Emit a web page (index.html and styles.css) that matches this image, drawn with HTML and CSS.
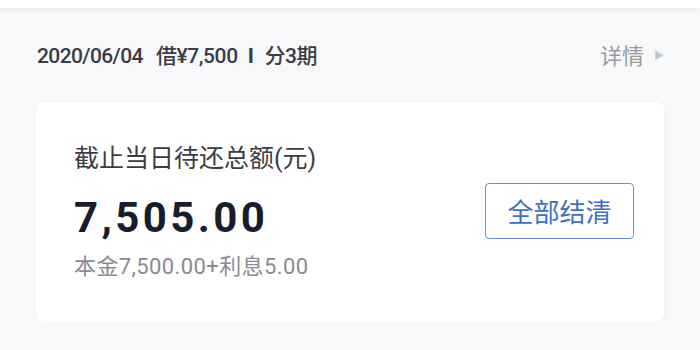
FILE: index.html
```html
<!DOCTYPE html>
<html lang="zh-CN">
<head>
  <meta charset="UTF-8" />
  <meta name="viewport" content="width=device-width, initial-scale=1.0" />
  <title>借款详情</title>
  <link rel="stylesheet" href="styles.css">
</head>
<body>

  <div class="topbar"></div>

  <!-- 借款信息 -->
  <div class="loan-head">
    <div class="loan-title"><span class="date">2020/06/04</span>借¥7,500<span class="sep">I</span>分3期</div>
    <div class="loan-more">详情 <span class="arrow">▶</span></div>
  </div>

  <!-- 待还卡片 -->
  <div class="card">
    <div class="card-info">
      <div class="label">截止当日待还总额(元)</div>
      <div class="amount">7,505.00</div>
      <div class="detail">本金7,500.00+利息5.00</div>
    </div>
    <button class="btn-settle">全部结清</button>
  </div>

</body>
</html>
```

FILE: styles.css
```css
body {
  margin: 0;
  background: #f7f8fa;
  font-family: Roboto, "Noto Sans CJK SC", sans-serif;
  color: #333;
}

.topbar {
  height: 8px;
  background: #fff;
  box-shadow: 0 2px 4px rgba(0,0,0,0.05);
}

.loan-head {
  display: flex;
  justify-content: space-between;
  align-items: center;
  padding: 30px 36px 0 37px;
  height: 32px;
}

.loan-title {
  font-size: 21px;
  font-weight: 500;
  letter-spacing: -0.4px;
  color: #3a3c45;
}

.loan-title .date {
  letter-spacing: -0.6px;
  margin-right: 13px;
}

.loan-title .sep {
  font-weight: 700;
  margin: 0 11px 0 10px;
}

.loan-more {
  font-size: 22px;
  color: #9a9aa0;
  display: flex;
  align-items: center;
}

.loan-more .arrow {
  font-size: 10px;
  color: #c5c6cc;
  margin-left: 10px;
}

.card {
  margin: 32px 36px 0;
  height: 219px;
  background: #fff;
  border-radius: 7px;
  box-shadow: 0 2px 8px rgba(0,0,0,0.03);
  display: flex;
  align-items: center;
  justify-content: space-between;
  padding: 0 30px 0 38px;
}

.label {
  font-size: 25px;
  line-height: 34px;
  color: #3b3d44;
}

.amount {
  font-size: 42px;
  font-weight: 700;
  letter-spacing: 3.4px;
  color: #191c2d;
  margin-top: 17px;
  line-height: 50px;
}

.detail {
  font-size: 22px;
  line-height: 28px;
  letter-spacing: 0.4px;
  color: #8a8b92;
  margin-top: 10px;
}

.btn-settle {
  width: 149px;
  height: 56px;
  background: #fff;
  border: 1px solid #6d8fc9;
  border-radius: 4px;
  color: #3f6fc2;
  font-family: "Noto Sans CJK SC", sans-serif;
  font-size: 26px;
  margin-bottom: 2px;
}
```
